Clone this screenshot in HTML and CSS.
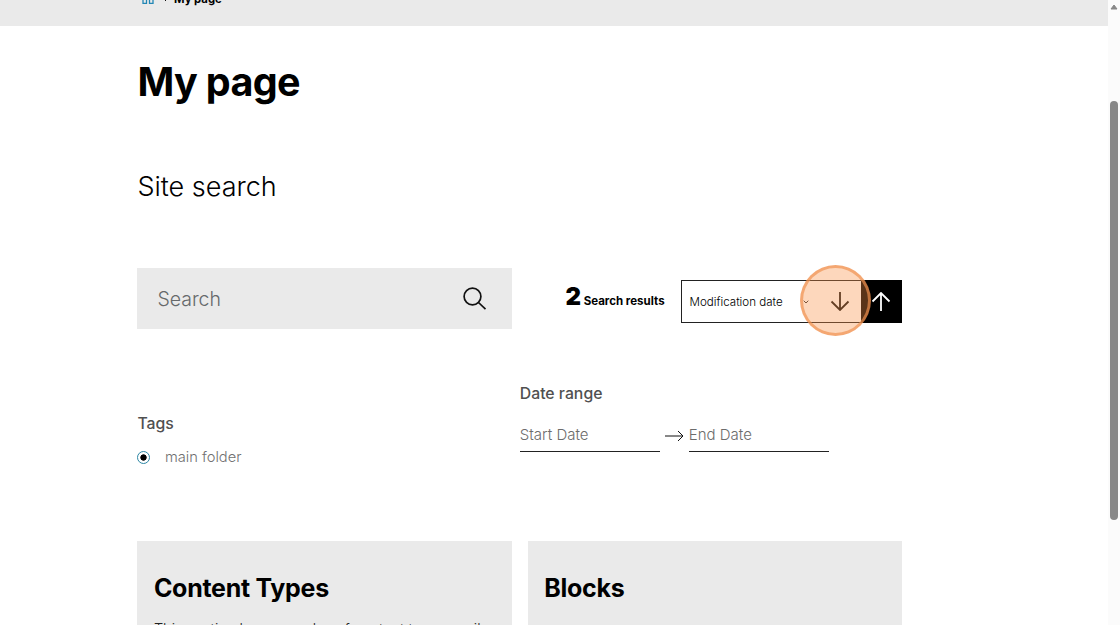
FILE: index.html
```
<!DOCTYPE html>
<html lang="en">
<head>
<meta charset="utf-8">
<title>My page</title>
<link rel="stylesheet" href="styles.css">
</head>
<body>
<div class="viewport">
  <div class="page">
    <nav class="breadcrumb">
      <svg class="home" width="12" height="12" viewBox="0 0 12 12"><path d="M1 3v8.300h3.500v-5M11 3v8.300H7.500v-5M1 3l5-3 5 3M4.500 6.300h3"/></svg>
      <svg class="separator" width="4" height="6" viewBox="0 0 4 6"><path d="M1 1l2 2-2 2"/></svg>
      <span>My page</span>
    </nav>
    <main class="content">
      <h1>My page</h1>
      <h2 class="subtitle">Site search</h2>
      <div class="toolbar">
        <div class="search">
          <span>Search</span>
          <svg width="26" height="26" viewBox="0 0 26 26"><circle cx="10.500" cy="10.500" r="8.400"/><path d="M16.500 16.500l7 6.700"/></svg>
        </div>
        <div class="results"><b>2</b> <span>Search results</span></div>
        <div class="sort">
          <span class="sort-label">Modification date</span>
          <svg class="chevron" width="6" height="4" viewBox="0 0 6 4"><path d="M.7.7l2.300 2.300 2.300-2.300"/></svg>
          <span class="arrow down"><svg width="20" height="20" viewBox="0 0 20 20"><path d="M10 1v18M1.500 10.500l8.500 8.500 8.500-8.500"/></svg></span>
          <span class="arrow up"><svg width="20" height="20" viewBox="0 0 20 20"><path d="M10 19V1M1.500 9.500l8.500-8.500 8.500 8.500"/></svg></span>
          <span class="click-marker"></span>
        </div>
      </div>
      <div class="filters">
        <section class="tags">
          <h3>Tags</h3>
          <div class="option"><span class="radio"></span><span>main folder</span></div>
        </section>
        <section class="dates">
          <h3>Date range</h3>
          <div class="range">
            <span class="date">Start Date</span>
            <svg width="19" height="12" viewBox="0 0 19 12"><path d="M0 6h18M13 1l5 5-5 5"/></svg>
            <span class="date">End Date</span>
          </div>
        </section>
      </div>
      <div class="cards">
        <article class="card"><h2>Content Types</h2><p>This section has examples of content types easily</p></article>
        <article class="card"><h2>Blocks</h2></article>
      </div>
    </main>
  </div>
  <div class="scrollbar">
    <svg width="8" height="6" viewBox="0 0 8 6"><path d="M4 1L7 5H1z"/></svg>
    <span class="thumb"></span>
  </div>
</div>
</body>
</html>
```
FILE: styles.css
```
* { box-sizing: border-box; }
body { margin: 0; font-family: Inter, sans-serif; color: #000; background: #fff; }
h1, h2, h3, p { margin: 0; }
svg { display: block; fill: none; stroke: #111; flex: none; }
.viewport { display: flex; height: 625px; overflow: hidden; }
.page { flex: 1; overflow: hidden; }
.breadcrumb { display: flex; height: 26px; padding-left: 141.500px; background: #eaeaea; font-size: 11.300px; line-height: 14px; font-weight: 700; }
.home { margin-top: -8px; stroke: #2387b5; stroke-width: 1.300; }
.separator { margin: -4px 6.500px 0 10px; }
.breadcrumb span { margin-top: -8px; }
.content { width: 764.600px; margin-left: 137.400px; padding-top: 31px; }
h1 { font-size: 39.500px; line-height: 50px; font-weight: 700; letter-spacing: -.65px; }
.subtitle { margin-top: 62px; font-size: 27px; line-height: 36px; font-weight: 300; }
.toolbar { display: flex; align-items: center; height: 61px; margin-top: 63px; }
.search { display: flex; align-items: center; justify-content: space-between; width: 375px; height: 61px; padding: 0 24px 0 20px; background: #eaeaea; color: #66696b; font-size: 19.500px; font-weight: 300; }
.search svg { stroke-width: 1.700; }
.results { width: 168.600px; margin-top: -4px; padding-left: 53px; font-size: 11.500px; font-weight: 700; white-space: nowrap; }
.results b { font-size: 24px; }
.sort { position: relative; display: flex; align-items: center; width: 221px; height: 43px; margin-top: 6px; border: 1px solid #222; border-right: 0; font-size: 11.600px; font-weight: 300; }
.sort-label { width: 122px; padding-left: 7.500px; }
.chevron { stroke: #333; }
.arrow { display: flex; align-items: center; justify-content: center; height: 43px; }
.arrow svg { stroke-width: 1.800; }
.down { width: 52px; padding-left: 10px; }
.down svg { margin-top: -2px; }
.up { width: 41px; padding-right: 2px; background: #000; }
.up svg { stroke: #fff; }
.click-marker { position: absolute; left: 118px; top: -16px; width: 71px; height: 71px; border: 3px solid rgba(239, 145, 78, .68); border-radius: 50%; background: rgba(250, 145, 69, .36); }
.filters { display: flex; height: 212px; padding-top: 55px; color: #505050; }
h3 { font-size: 15.800px; line-height: 20px; font-weight: 500; }
.tags { width: 382.400px; padding-top: 30px; }
.option { display: flex; align-items: center; gap: 14.500px; margin-top: 13px; color: #707070; font-size: 14.700px; line-height: 20px; font-weight: 300; }
.radio { width: 13px; height: 13px; border: 1px solid #2c86a4; border-radius: 50%; background: radial-gradient(circle, #000 0 2.800px, #fff 3.500px); }
.range { display: flex; align-items: center; margin-top: 18px; gap: 5px; }
.range svg { margin-top: -2px; }
.date { width: 140px; height: 30px; border-bottom: 1px solid #222; color: #6c6c6c; font-size: 15px; line-height: 26px; font-weight: 300; }
.cards { display: grid; grid-template-columns: repeat(2, minmax(0, 1fr)); gap: 16px; }
.card { height: 180px; padding: 31px 16.500px; background: #eaeaea; }
.card h2 { font-size: 25px; line-height: 32px; font-weight: 700; letter-spacing: -.28px; }
.card p { margin-top: 14px; color: #222; font-size: 14.500px; line-height: 22px; font-weight: 300; white-space: nowrap; }
.scrollbar { display: flex; flex-direction: column; align-items: center; width: 12px; padding-top: 4px; background: #fbfbfb; }
.scrollbar svg { fill: #888; stroke: #888; }
.thumb { width: 8px; height: 419px; margin-top: 91px; border-radius: 4px; background: #888; }
```
